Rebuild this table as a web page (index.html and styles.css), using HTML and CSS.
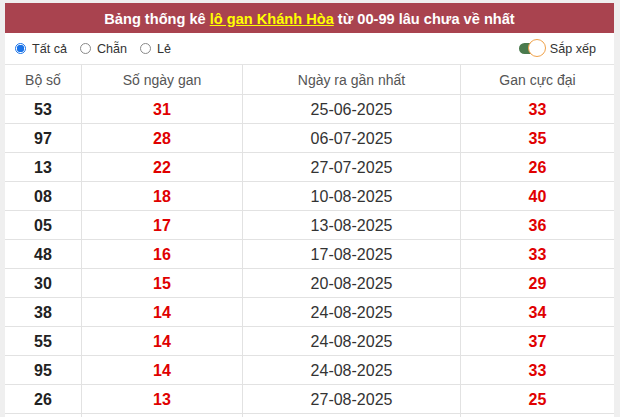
FILE: index.html
```html
<!DOCTYPE html>
<html lang="vi">
<head>
<meta charset="utf-8">
<link rel="stylesheet" href="styles.css">
</head>
<body>
<div class="box">
  <div class="title">Bảng thống kê <a class="hl" href="#">lô gan Khánh Hòa</a> từ 00-99 lâu chưa về nhất</div>
  <div class="filters">
    <div class="radios">
      <label class="opt"><span class="radio on"></span>Tất cả</label>
      <label class="opt"><span class="radio"></span>Chẵn</label>
      <label class="opt"><span class="radio"></span>Lẻ</label>
    </div>
    <div class="sort"><span class="toggle"><span class="knob"></span></span>Sắp xếp</div>
  </div>
  <table class="tbl">
    <thead>
      <tr><th class="c1">Bộ số</th><th class="c2">Số ngày gan</th><th class="c3">Ngày ra gần nhất</th><th class="c4">Gan cực đại</th></tr>
    </thead>
    <tbody>
      <tr><td class="num">53</td><td class="red">31</td><td>25-06-2025</td><td class="red">33</td></tr>
      <tr><td class="num">97</td><td class="red">28</td><td>06-07-2025</td><td class="red">35</td></tr>
      <tr><td class="num">13</td><td class="red">22</td><td>27-07-2025</td><td class="red">26</td></tr>
      <tr><td class="num">08</td><td class="red">18</td><td>10-08-2025</td><td class="red">40</td></tr>
      <tr><td class="num">05</td><td class="red">17</td><td>13-08-2025</td><td class="red">36</td></tr>
      <tr><td class="num">48</td><td class="red">16</td><td>17-08-2025</td><td class="red">33</td></tr>
      <tr><td class="num">30</td><td class="red">15</td><td>20-08-2025</td><td class="red">29</td></tr>
      <tr><td class="num">38</td><td class="red">14</td><td>24-08-2025</td><td class="red">34</td></tr>
      <tr><td class="num">55</td><td class="red">14</td><td>24-08-2025</td><td class="red">37</td></tr>
      <tr><td class="num">95</td><td class="red">14</td><td>24-08-2025</td><td class="red">33</td></tr>
      <tr><td class="num">26</td><td class="red">13</td><td>27-08-2025</td><td class="red">25</td></tr>
      <tr><td class="num"></td><td class="red"></td><td></td><td class="red"></td></tr>
    </tbody>
  </table>
</div>
</body>
</html>
```
FILE: styles.css
```css
html, body {
  margin: 0;
  padding: 0;
  background: #efefef;
  font-family: "Liberation Sans", Arial, sans-serif;
}
body {
  padding: 3px 6px 0 5px;
  overflow: hidden;
  height: 417px;
  box-sizing: border-box;
}
.box {
  background: #fff;
}
.title {
  background: #a9434f;
  color: #fff;
  font-weight: bold;
  font-size: 14.6px;
  text-align: center;
  height: 30px;
  line-height: 32px;
}
.hl {
  color: #ffff00;
  text-decoration: underline;
}
.filters {
  display: flex;
  justify-content: space-between;
  align-items: center;
  height: 31px;
  padding: 0 18px 0 10px;
  border-bottom: 1px solid #e4e4e4;
  font-size: 12.6px;
  color: #333;
}
.radios {
  display: flex;
  gap: 13px;
}
.opt {
  display: flex;
  align-items: center;
  gap: 6px;
}
.radio {
  width: 11px;
  height: 11px;
  border-radius: 50%;
  border: 1px solid #8a8a8a;
  box-sizing: border-box;
  background: #fff;
  display: inline-block;
}
.radio.on {
  border: 1px solid #1a73e8;
  background: radial-gradient(circle, #1a73e8 0 3.5px, #fff 4px);
}
.sort {
  display: flex;
  align-items: center;
  gap: 4px;
}
.toggle {
  position: relative;
  width: 22px;
  height: 11px;
  margin-right: 5px;
  background: #4a7a4d;
  border-radius: 6px;
  display: inline-block;
}
.knob {
  position: absolute;
  right: -5px;
  top: -4px;
  width: 18px;
  height: 18px;
  border-radius: 50%;
  background: #fff;
  border: 1.5px solid #f0a24a;
  box-sizing: border-box;
}
.tbl {
  width: 100%;
  border-collapse: collapse;
  table-layout: fixed;
}
.tbl th, .tbl td {
  border: 1px solid #e2e2e2;
  text-align: center;
  height: 28px;
  padding: 0;
}
.tbl tr > :first-child { border-left: none; }
.tbl tr > :last-child { border-right: none; }
.tbl thead th { border-top: none; }
.tbl th {
  font-weight: normal;
  color: #555;
  font-size: 14px;
  height: 28px;
  padding-top: 1px;
}
.c1 { width: 76px; }
.c2 { width: 160px; }
.c3 { width: 217px; }
.tbl td {
  font-size: 16px;
  color: #333;
  height: 27px;
  padding-top: 1px;
}
.tbl td.num {
  font-weight: bold;
  color: #222;
}
.tbl td.red {
  font-weight: bold;
  color: #e00000;
}
```
